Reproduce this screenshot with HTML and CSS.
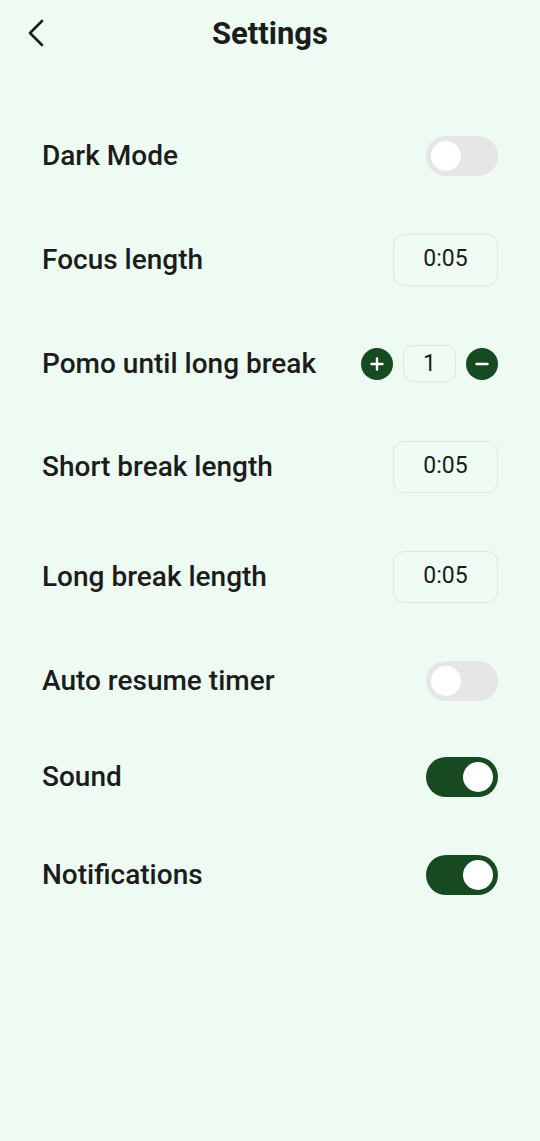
FILE: index.html
```html
<!DOCTYPE html>
<html>
<head>
<meta charset="utf-8">
<link rel="stylesheet" href="styles.css">
</head>
<body>
<div class="page">
  <header class="topbar">
    <button class="back" aria-label="Back">
      <svg width="18" height="28" viewBox="0 0 18 28"><path d="M15 2 L3 14 L15 26" fill="none" stroke="#1c1c1c" stroke-width="2.6" stroke-linecap="round" stroke-linejoin="round"/></svg>
    </button>
    <h1 class="title">Settings</h1>
  </header>
  <main class="list">
    <div class="row">
      <span class="label">Dark Mode</span>
      <span class="toggle"><span class="knob"></span></span>
    </div>
    <div class="row">
      <span class="label">Focus length</span>
      <span class="box">0:05</span>
    </div>
    <div class="row row-stepper">
      <span class="label">Pomo until long break</span>
      <span class="stepper">
        <span class="circle">
          <svg width="16" height="16" viewBox="0 0 16 16"><path d="M8 2.5v11M2.5 8h11" stroke="#fff" stroke-width="2.4" stroke-linecap="round"/></svg>
        </span>
        <span class="small-box">1</span>
        <span class="circle">
          <svg width="16" height="16" viewBox="0 0 16 16"><path d="M2.5 8h11" stroke="#fff" stroke-width="2.4" stroke-linecap="round"/></svg>
        </span>
      </span>
    </div>
    <div class="row">
      <span class="label">Short break length</span>
      <span class="box">0:05</span>
    </div>
    <div class="row">
      <span class="label">Long break length</span>
      <span class="box">0:05</span>
    </div>
    <div class="row row-tight">
      <span class="label">Auto resume timer</span>
      <span class="toggle"><span class="knob"></span></span>
    </div>
    <div class="row">
      <span class="label">Sound</span>
      <span class="toggle on"><span class="knob"></span></span>
    </div>
    <div class="row">
      <span class="label">Notifications</span>
      <span class="toggle on"><span class="knob"></span></span>
    </div>
  </main>
</div>
</body>
</html>
```
FILE: styles.css
```css
* { box-sizing: border-box; }
html, body {
  margin: 0;
  padding: 0;
  background: #edfbf2;
}
body {
  font-family: Roboto, "Noto Sans", sans-serif;
  color: #1c1c1c;
  width: 540px;
  height: 1141px;
}
.page {
  display: flex;
  flex-direction: column;
}
.topbar {
  position: relative;
  height: 66px;
  display: flex;
  align-items: center;
  justify-content: center;
}
.back {
  position: absolute;
  left: 27px;
  top: 19px;
  background: none;
  border: none;
  padding: 0;
  width: 18px;
  height: 28px;
  display: flex;
}
.title {
  margin: 0;
  font-size: 31px;
  font-weight: 700;
  letter-spacing: 0;
}
.list {
  display: flex;
  flex-direction: column;
  gap: 58px;
  padding: 70px 42px 0 42px;
}
.row {
  display: flex;
  align-items: center;
  justify-content: space-between;
}
.row-stepper {
  min-height: 39px;
}
.row-tight {
  margin-bottom: -2px;
}
.label {
  font-size: 28px;
  font-weight: 500;
  line-height: 34px;
}
.toggle {
  width: 72px;
  height: 40px;
  border-radius: 20px;
  background: #e6e6e6;
  display: flex;
  align-items: center;
  padding: 0 5px;
}
.toggle .knob {
  width: 30px;
  height: 30px;
  border-radius: 50%;
  background: #fff;
}
.toggle.on {
  background: #184a22;
  justify-content: flex-end;
}
.box {
  width: 105px;
  height: 52px;
  border: 1px solid #dde9e1;
  border-radius: 11px;
  background: #effcf4;
  display: flex;
  align-items: center;
  justify-content: center;
  font-size: 23px;
  font-weight: 400;
  padding-bottom: 4px;
}
.stepper {
  display: flex;
  align-items: center;
  gap: 10px;
}
.circle {
  width: 32px;
  height: 32px;
  border-radius: 50%;
  background: #184a22;
  display: flex;
  align-items: center;
  justify-content: center;
}
.small-box {
  width: 53px;
  height: 37px;
  border: 1px solid #dde9e1;
  border-radius: 10px;
  background: #effcf4;
  display: flex;
  align-items: center;
  justify-content: center;
  font-size: 23px;
}
```
